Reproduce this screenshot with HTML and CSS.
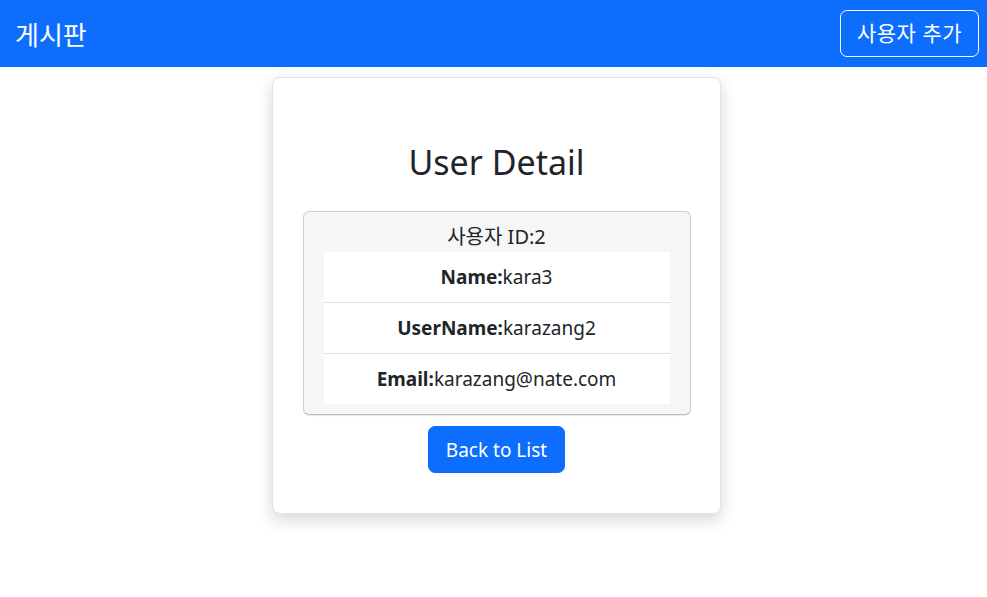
FILE: index.html
```html
<!DOCTYPE html>
<html lang="ko">
<head>
<meta charset="utf-8">
<title>게시판</title>
<link rel="stylesheet" href="styles.css">
</head>
<body>
<nav class="navbar">
  <span class="brand">게시판</span>
  <button class="btn btn-outline">사용자 추가</button>
</nav>
<main class="page">
  <section class="card">
    <h1 class="title">User Detail</h1>
    <div class="detail-box">
      <div class="detail-head">사용자 ID:2</div>
      <ul class="list">
        <li class="list-item"><strong>Name:</strong>kara3</li>
        <li class="list-item"><strong>UserName:</strong>karazang2</li>
        <li class="list-item"><strong>Email:</strong>karazang@nate.com</li>
      </ul>
    </div>
    <button class="btn btn-primary">Back to List</button>
  </section>
</main>
</body>
</html>
```
FILE: styles.css
```css
* { box-sizing: border-box; }
html, body {
  margin: 0;
  padding: 0;
  background: #fff;
  color: #212529;
  font-family: "Noto Sans", "Noto Sans CJK KR", sans-serif;
}
.navbar {
  height: 67px;
  background: #0d6efd;
  display: flex;
  align-items: center;
  justify-content: space-between;
  padding: 0 8px 0 15px;
}
.brand {
  color: #fff;
  font-size: 26px;
  font-family: "Noto Sans CJK KR", sans-serif;
  font-weight: 400;
}
.btn {
  font-family: "Noto Sans", "Noto Sans CJK KR", sans-serif;
  font-size: 19px;
  border-radius: 7px;
  padding: 0 10px;
  height: 47px;
  line-height: 1;
  cursor: pointer;
}
.btn-outline {
  background: transparent;
  color: #fff;
  border: 1px solid #fff;
  width: 139px;
  font-size: 21px;
  letter-spacing: 0.5px;
}
.btn-primary {
  background: #0d6efd;
  color: #fff;
  border: 1px solid #0d6efd;
  width: 137px;
  margin-top: 11px;
  padding-top: 2px;
}
.page {
  display: flex;
  justify-content: center;
  padding: 10px 0 60px 6px;
}
.card {
  width: 449px;
  height: 437px;
  border: 1px solid #e3e3e3;
  border-radius: 8px;
  box-shadow: 0 6px 16px rgba(0,0,0,0.16);
  background: #fff;
  display: flex;
  flex-direction: column;
  align-items: center;
  padding: 56px 30px 0;
}
.title {
  margin: 0;
  font-size: 34px;
  font-weight: 400;
  line-height: 56px;
  height: 77px;
}
.detail-box {
  width: 388px;
  background: #f6f6f6;
  border: 1px solid #d0d0d0;
  border-bottom-color: #bdbdbd;
  border-radius: 6px;
  padding: 0 20px 10px;
  box-shadow: 0 1px 1px rgba(0,0,0,0.08);
}
.detail-head {
  text-align: center;
  font-size: 20px;
  line-height: 24px;
  padding-top: 13px;
  height: 40px;
}
.list {
  list-style: none;
  margin: 0;
  padding: 0;
  background: #fff;
}
.list-item {
  height: 51px;
  line-height: 50px;
  text-align: center;
  font-size: 19px;
  border-bottom: 1px solid #dee2e6;
}
.list-item:last-child {
  border-bottom: none;
  height: 50px;
}
.list-item strong { font-weight: 700; }
```
